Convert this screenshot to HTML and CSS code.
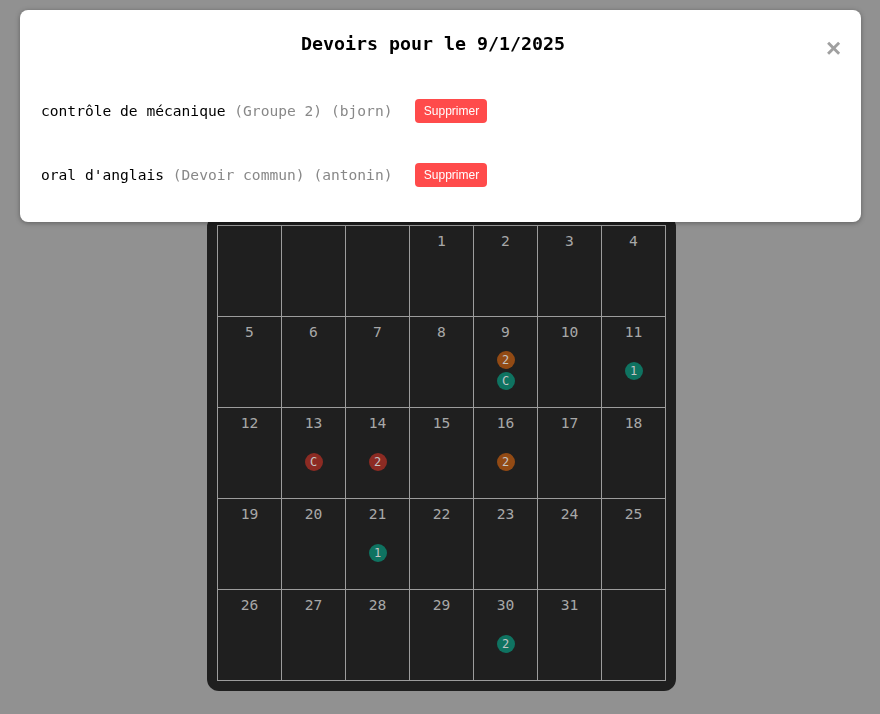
FILE: index.html
```html
<!DOCTYPE html>
<html lang="fr">
<head>
<meta charset="utf-8">
<title>Calendrier des devoirs</title>
<link rel="stylesheet" href="styles.css">
</head>
<body>
<main class="page">
  <section class="calendar" aria-label="Janvier 2025">
    <div class="grid">
      <div class="cell empty"></div>
      <div class="cell empty"></div>
      <div class="cell empty"></div>
      <div class="cell"><span class="num">1</span><div class="badges"></div></div>
      <div class="cell"><span class="num">2</span><div class="badges"></div></div>
      <div class="cell"><span class="num">3</span><div class="badges"></div></div>
      <div class="cell"><span class="num">4</span><div class="badges"></div></div>

      <div class="cell"><span class="num">5</span><div class="badges"></div></div>
      <div class="cell"><span class="num">6</span><div class="badges"></div></div>
      <div class="cell"><span class="num">7</span><div class="badges"></div></div>
      <div class="cell"><span class="num">8</span><div class="badges"></div></div>
      <div class="cell"><span class="num">9</span><div class="badges"><span class="badge orange">2</span><span class="badge green">C</span></div></div>
      <div class="cell"><span class="num">10</span><div class="badges"></div></div>
      <div class="cell"><span class="num">11</span><div class="badges"><span class="badge green">1</span></div></div>

      <div class="cell"><span class="num">12</span><div class="badges"></div></div>
      <div class="cell"><span class="num">13</span><div class="badges"><span class="badge red">C</span></div></div>
      <div class="cell"><span class="num">14</span><div class="badges"><span class="badge red">2</span></div></div>
      <div class="cell"><span class="num">15</span><div class="badges"></div></div>
      <div class="cell"><span class="num">16</span><div class="badges"><span class="badge orange">2</span></div></div>
      <div class="cell"><span class="num">17</span><div class="badges"></div></div>
      <div class="cell"><span class="num">18</span><div class="badges"></div></div>

      <div class="cell"><span class="num">19</span><div class="badges"></div></div>
      <div class="cell"><span class="num">20</span><div class="badges"></div></div>
      <div class="cell"><span class="num">21</span><div class="badges"><span class="badge green">1</span></div></div>
      <div class="cell"><span class="num">22</span><div class="badges"></div></div>
      <div class="cell"><span class="num">23</span><div class="badges"></div></div>
      <div class="cell"><span class="num">24</span><div class="badges"></div></div>
      <div class="cell"><span class="num">25</span><div class="badges"></div></div>

      <div class="cell"><span class="num">26</span><div class="badges"></div></div>
      <div class="cell"><span class="num">27</span><div class="badges"></div></div>
      <div class="cell"><span class="num">28</span><div class="badges"></div></div>
      <div class="cell"><span class="num">29</span><div class="badges"></div></div>
      <div class="cell"><span class="num">30</span><div class="badges"><span class="badge green">2</span></div></div>
      <div class="cell"><span class="num">31</span><div class="badges"></div></div>
      <div class="cell empty"></div>
    </div>
  </section>
</main>

<div class="modal" role="dialog">
  <div class="modal-head">
    <h2 class="modal-title">Devoirs pour le 9/1/2025</h2>
    <button class="close" aria-label="Fermer">&times;</button>
  </div>
  <ul class="task-list">
    <li class="task">
      <span class="task-text">contrôle de mécanique <span class="muted">(Groupe 2)</span> <span class="muted">(bjorn)</span></span>
      <button class="delete">Supprimer</button>
    </li>
    <li class="task">
      <span class="task-text">oral d'anglais <span class="muted">(Devoir commun)</span> <span class="muted">(antonin)</span></span>
      <button class="delete">Supprimer</button>
    </li>
  </ul>
</div>
</body>
</html>
```
FILE: styles.css
```css
* { box-sizing: border-box; }

html, body {
  margin: 0;
  height: 100%;
}

body {
  background: #919191;
  font-family: "DejaVu Sans Mono", "Liberation Mono", monospace;
  overflow: hidden;
}

.page {
  padding: 215px 0 24px 3px;
}

.calendar {
  width: 469px;
  margin: 0 auto;
  padding: 10px;
  background: #1f1f1f;
  border-radius: 12px;
}

.grid {
  display: grid;
  grid-template-columns: repeat(7, 64px);
  grid-auto-rows: 91px;
  border-top: 1px solid #9c9c9c;
  border-left: 1px solid #9c9c9c;
  width: 449px;
}

.cell {
  border-right: 1px solid #9c9c9c;
  border-bottom: 1px solid #9c9c9c;
  display: flex;
  flex-direction: column;
  align-items: center;
  padding: 6px 0;
}

.num {
  font-size: 14.6px;
  line-height: 17px;
  color: #a8a8a8;
}

.badges {
  flex: 1;
  display: flex;
  flex-direction: column;
  align-items: center;
  justify-content: center;
  gap: 3px;
}

.badge {
  width: 18px;
  height: 18px;
  border-radius: 50%;
  font-size: 12px;
  line-height: 18px;
  text-align: center;
  color: #c4c4c4;
}

.badge.green { background: #0f7361; }
.badge.orange { background: #924a14; }
.badge.red { background: #8c2b23; }

/* Modal */
.modal {
  position: fixed;
  top: 10px;
  left: 20px;
  width: 841px;
  height: 212px;
  background: #fff;
  border-radius: 8px;
  box-shadow: 0 1px 5px rgba(0, 0, 0, 0.35);
  padding: 22px 20px 15px;
}

.modal-head {
  display: flex;
  align-items: flex-start;
  height: 24px;
  margin-bottom: 23px;
}

.modal-title {
  flex: 1;
  margin: 0;
  text-align: center;
  font-size: 18.3px;
  line-height: 24px;
  font-weight: bold;
  color: #000;
}

.close {
  width: 15px;
  padding: 0;
  margin-top: 4px;
  border: 0;
  background: none;
  font-family: "Liberation Sans", Arial, sans-serif;
  font-size: 26px;
  line-height: 24px;
  font-weight: bold;
  color: #a0a0a0;
  display: flex;
  justify-content: center;
  overflow: visible;
}

.task-list {
  list-style: none;
  margin: 0;
  padding: 0;
}

.task {
  display: flex;
  align-items: center;
  gap: 23px;
  padding: 20px 0;
}

.task-text {
  margin-left: 1px;
  margin-top: -2px;
  font-size: 14.6px;
  color: #000;
  white-space: pre;
}

.muted { color: #888; }

.delete {
  height: 24px;
  width: 72px;
  padding: 0;
  border: 0;
  border-radius: 4px;
  background: #ff4b4b;
  color: #fff;
  font-family: "Liberation Sans", Arial, sans-serif;
  font-size: 12px;
}
```
